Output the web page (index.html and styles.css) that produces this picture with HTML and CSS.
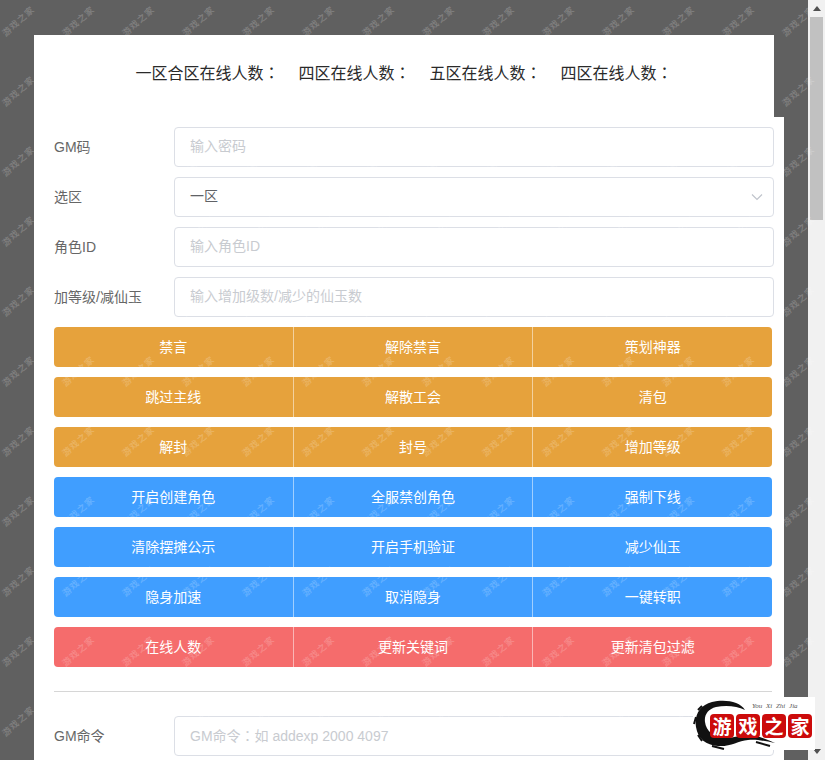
FILE: index.html
```html
<!DOCTYPE html>
<html lang="zh">
<head>
<meta charset="utf-8">
<title>GM</title>
<link rel="stylesheet" href="styles.css">
</head>
<body>
<div class="page">
  <main class="content">
    <header class="status">
      <span>一区合区在线人数<i lang="zh-TW">：</i></span><span>四区在线人数<i lang="zh-TW">：</i></span><span>五区在线人数<i lang="zh-TW">：</i></span><span>四区在线人数<i lang="zh-TW">：</i></span>
    </header>
    <section class="form">
      <div class="row"><label>GM码</label><div class="field ph">输入密码</div></div>
      <div class="row"><label>选区</label><div class="field sel">一区
        <svg class="chev" viewBox="0 0 12 8"><path d="M1 1.5 6 6.5 11 1.5"/></svg></div></div>
      <div class="row"><label>角色ID</label><div class="field ph">输入角色ID</div></div>
      <div class="row"><label>加等级/减仙玉</label><div class="field ph">输入增加级数/减少的仙玉数</div></div>
      <div class="btns orange"><button>禁言</button><button>解除禁言</button><button>策划神器</button></div>
      <div class="btns orange"><button>跳过主线</button><button>解散工会</button><button>清包</button></div>
      <div class="btns orange"><button>解封</button><button>封号</button><button>增加等级</button></div>
      <div class="btns blue"><button>开启创建角色</button><button>全服禁创角色</button><button>强制下线</button></div>
      <div class="btns blue"><button>清除摆摊公示</button><button>开启手机验证</button><button>减少仙玉</button></div>
      <div class="btns blue"><button>隐身加速</button><button>取消隐身</button><button>一键转职</button></div>
      <div class="btns red"><button>在线人数</button><button>更新关键词</button><button>更新清包过滤</button></div>
      <hr class="divider">
      <div class="row"><label>GM命令</label><div class="field ph">GM命令<i lang="zh-TW">：</i>如 addexp 2000 4097</div></div>
    </section>
  </main>
  <aside class="scrollbar">
    <svg class="arrow" viewBox="0 0 8 5"><path d="M4 0 8 5H0Z"/></svg>
    <div class="thumb"></div>
    <svg class="arrow down" viewBox="0 0 8 5"><path d="M0 0H8L4 5Z"/></svg>
  </aside>
  <div class="marks" id="marks" aria-hidden="true"></div>
  <div class="logo">
    <svg class="swirl" viewBox="3 0 122 53">
      <path class="ink" d="M55 13C47 9 36 8 26 10 18 12 14 18 15 25 16 34 24 41 36 41 44 41 50 38 58 38 66 38 76 42 85 46 74 44 66 42 58 43 48 44 40 50 28 49 16 48 8 42 6 30 4 18 10 8 22 5 34 2 50 4 55 13Z"/>
      <path class="thin" d="M6 20 4 27M8 38 12 44M12 9 8 13M22 49 34 52M66 45 80 49"/>
    </svg>
    <span class="pinyin">You Xi Zhi Jia</span>
    <div class="seals"><b>游</b><b>戏</b><b>之</b><b>家</b></div>
  </div>
</div>
<script src="marks.js"></script>
</body>
</html>
```
FILE: marks.js
```js
var box = document.getElementById('marks');
for (var y = 0; y < 11; y++) {
  for (var x = 0; x < 14; x++) {
    var s = document.createElement('span');
    s.textContent = '游戏之家';
    s.style.left = (-2 + x * 60) + 'px';
    s.style.top = (15 + y * 70) + 'px';
    box.appendChild(s);
  }
}
```
FILE: styles.css
```css
* { box-sizing: border-box; }
html, body { margin: 0; height: 100%; overflow: hidden; }
body { font-family: "Liberation Sans", "Noto Sans CJK SC", sans-serif; font-size: 14px; color: #606266; }
i { font-style: normal; font-family: "Noto Sans CJK TC", sans-serif; }
.page { position: relative; display: flex; width: 825px; height: 760px; background: #606060; overflow: hidden; }
.content { width: 808px; padding: 35px 0 0 34px; }
.status { width: 740px; height: 82px; background: #fff; display: flex; justify-content: center; gap: 19px; padding-top: 27px; font-size: 16px; line-height: 20px; color: #2a2a2a; }
.status span { white-space: nowrap; }
.form { width: 750px; height: 660px; background: #fff; padding: 10px 10px 0 20px; display: flex; flex-direction: column; }
.row { display: flex; align-items: center; height: 40px; margin-bottom: 10px; flex: none; }
.row label { width: 120px; flex: none; padding-bottom: 3px; color: #666; }
.field { width: 600px; height: 40px; border: 1px solid #dcdfe6; border-radius: 4px; padding: 0 15px; line-height: 36px; background: #fff; position: relative; }
.ph { color: #c8cbd0; }
.chev { position: absolute; right: 10px; top: 15px; width: 12px; height: 8px; fill: none; stroke: #c0c4cc; stroke-width: 1.2; }
.btns { display: flex; width: 718px; height: 40px; margin-bottom: 10px; flex: none; border-radius: 4px; overflow: hidden; }
.btns button { flex: 1 1 0; border: 0; border-left: 1px solid rgba(255,255,255,.5); background: none; color: #fff; font: inherit; padding: 0 0 2px; }
.btns button:first-child { border-left: 0; }
.orange { background: #e6a23c; }
.blue { background: #409eff; }
.red { background: #f56c6c; }
.divider { width: 718px; height: 1px; border: 0; background: #d6d6d6; margin: 14px 0 24px; flex: none; }
.scrollbar { width: 17px; background: #f1f1f1; position: relative; display: flex; flex-direction: column; align-items: center; flex: none; }
.arrow { width: 8px; height: 5px; margin: 6px 0; fill: #505050; flex: none; }
.arrow.down { margin-top: auto; }
.thumb { width: 13px; height: 203px; background: #c1c1c1; }
.marks { position: absolute; inset: 0; pointer-events: none; overflow: hidden; }
.marks span { position: absolute; width: 44px; font-size: 9px; line-height: 10px; letter-spacing: 1px; font-family: "Noto Sans CJK SC", sans-serif; font-weight: 700; color: rgba(255,255,255,.2); transform: rotate(-42deg); white-space: nowrap; }
.logo { position: absolute; left: 693px; top: 697px; width: 122px; height: 53px; background: #fff; }
.swirl { position: absolute; inset: 0; width: 122px; height: 53px; }
.ink { fill: #111; }
.thin { fill: none; stroke: #111; stroke-width: 2; }
.pinyin { position: absolute; left: 59px; top: 5px; font-size: 7px; line-height: 9px; font-family: "Liberation Serif", serif; font-style: italic; color: #555; word-spacing: 2px; white-space: nowrap; }
.seals { position: absolute; left: 17px; top: 17px; display: flex; gap: 2px; }
.seals b { width: 24px; height: 24px; border-radius: 4px; background: #cc0b0b; color: #fff; font-size: 19px; line-height: 23px; font-weight: 700; text-align: center; font-family: "Noto Sans CJK SC", sans-serif; }
```
